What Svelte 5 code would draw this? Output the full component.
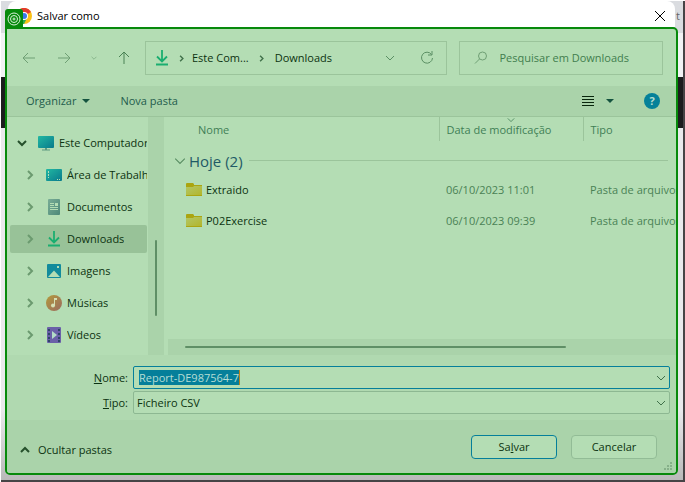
<script>
  const folders = [
    { name: 'Área de Trabalho', icon: 'desktop' },
    { name: 'Documentos', icon: 'document' },
    { name: 'Downloads', icon: 'download', selected: true },
    { name: 'Imagens', icon: 'picture' },
    { name: 'Músicas', icon: 'music' },
    { name: 'Vídeos', icon: 'video' }
  ];
  const files = [
    { name: 'Extraido', date: '06/10/2023 11:01', type: 'Pasta de arquivos' },
    { name: 'P02Exercise', date: '06/10/2023 09:39', type: 'Pasta de arquivos' }
  ];
  let fileName = $state('Report-DE987564-7');
</script>

{#snippet chevron(dir, size = 10)}
  <svg class="chev {dir}" width={size} height={size} viewBox="0 0 10 10" aria-hidden="true">
    <path d="M1 3l4 4 4-4" />
  </svg>
{/snippet}

{#snippet icon(kind)}
  <svg class="icon" width="16" height="16" viewBox="0 0 16 16" aria-hidden="true">
    {#if kind === 'computer'}
      <rect x="0" y="1" width="16" height="12" rx="1" fill="url(#teal)" />
      <path d="M7 13h2v2H7zM4 14.500h8v1H4z" fill="#5f9a80" />
    {:else if kind === 'desktop'}
      <rect x="0" y="2" width="16" height="12" rx="1" fill="url(#teal)" />
      <path d="M2 4h1v2H2zM2 7h1v2H2zM2 10h1v1H2zM11 12h1v1h-1zM13 12h1v1h-1z" fill="#b4ddb4" />
    {:else if kind === 'document'}
      <rect x="2" y="0" width="12" height="16" rx="1" fill="url(#slate)" />
      <path d="M4 4h4v1H4zM4 6h4v1H4zM9 4h3v3H9zM4 8h8v1H4zM4 10h8v1H4z" fill="#b4ddb4" />
    {:else if kind === 'download'}
      <path d="M8 0v11M3 6.500l5 5 5-5M2 14.500h12" fill="none" stroke="#1aae70" stroke-width="1.800" />
    {:else if kind === 'picture'}
      <rect x="1" y="1" width="14" height="14" rx="1" fill="#128b9c" />
      <path d="M2 14l6-6.500 6 6.500z" fill="#b4ddb4" />
      <rect x="11" y="3" width="2" height="2" fill="#b4ddb4" />
    {:else if kind === 'music'}
      <circle cx="8" cy="8" r="8" fill="url(#amber)" />
      <path d="M8 3h3v2H9v6H8z" fill="#d5dfb4" />
      <circle cx="7" cy="10.500" r="2" fill="#d5dfb4" />
    {:else if kind === 'video'}
      <rect x="1" y="0" width="14" height="16" rx="1" fill="#6a60a8" />
      <path d="M2 2h2v2H2zM2 6h2v2H2zM2 10h2v2H2zM2 13h2v2H2zM12 2h2v2h-2zM12 6h2v2h-2zM12 10h2v2h-2zM12 13h2v2h-2z" fill="#2e4668" />
      <path d="M6 4l5 4-5 4z" fill="#b4ddc8" />
    {:else if kind === 'folder'}
      <path d="M0 2q0-1 1-1h6l1 1v1h8v11H0z" fill="#aba510" />
      <path d="M0 5h7l1-1h8v9H0z" fill="url(#gold)" />
    {/if}
  </svg>
{/snippet}

<svg width="0" height="0" class="defs" aria-hidden="true">
  <defs>
    <linearGradient id="teal" x2="1" y2="1"><stop stop-color="#22b8a2" /><stop offset="1" stop-color="#087a8c" /></linearGradient>
    <linearGradient id="slate" y2="1"><stop stop-color="#79ad96" /><stop offset="1" stop-color="#4d8878" /></linearGradient>
    <linearGradient id="amber" x2="1" y2="1"><stop stop-color="#b39a3c" /><stop offset="1" stop-color="#9a6a60" /></linearGradient>
    <linearGradient id="gold" x2="1" y2="1"><stop stop-color="#b2c766" /><stop offset="1" stop-color="#b3b52c" /></linearGradient>
  </defs>
</svg>

<div class="screen">
  <div class="page">
    <div class="tabs">t</div>
    <div class="bar"></div>
    <div class="banner"></div>
    <div class="rest"></div>
  </div>

  <div class="dialog" role="dialog" aria-labelledby="title">
    <header>
      <svg width="16" height="16" viewBox="0 0 16 16" aria-hidden="true">
        <circle cx="8" cy="8" r="8" fill="#fbc116" />
        <path d="M8 8L1 4A8 8 0 0 1 15 4z" fill="#e33b2e" />
        <path d="M8 8L1 4A8 8 0 0 0 8 16l3-6z" fill="#2da94f" />
        <circle cx="8" cy="8" r="4" fill="#fff" />
        <circle cx="8" cy="8" r="3" fill="#3b78e7" />
      </svg>
      <h1 id="title">Salvar como</h1>
      <button class="close" aria-label="Fechar">
        <svg width="10" height="10" viewBox="0 0 10 10"><path d="M0 0l10 10M10 0L0 10" /></svg>
      </button>
    </header>
    <div class="badge">
      <svg width="14" height="14" viewBox="0 0 14 14" aria-hidden="true">
        <circle cx="7" cy="7" r="6" /><circle cx="7" cy="7" r="3.500" /><circle cx="7" cy="7" r="1" />
      </svg>
    </div>

    <div class="body">
      <nav>
        <div class="arrows">
          <button class="dim" aria-label="Voltar"><svg width="14" height="14" viewBox="0 0 14 14"><path d="M1 7h12M6 2L1 7l5 5" /></svg></button>
          <button class="dim" aria-label="Avançar"><svg width="14" height="14" viewBox="0 0 14 14"><path d="M1 7h12M8 2l5 5-5 5" /></svg></button>
          <button class="dim small" aria-label="Recentes">{@render chevron('down', 6)}</button>
          <button aria-label="Acima"><svg width="14" height="14" viewBox="0 0 14 14"><path d="M7 13V1M2 6l5-5 5 5" /></svg></button>
        </div>
        <div class="address">
          {@render icon('download')}
          <span class="sep">{@render chevron('right', 7)}</span>
          <a href="#computador">Este Com...</a>
          <span class="sep">{@render chevron('right', 7)}</span>
          <a href="#downloads">Downloads</a>
          <button class="expand" aria-label="Locais anteriores">{@render chevron('down')}</button>
          <button class="reload" aria-label="Atualizar">
            <svg width="14" height="14" viewBox="0 0 14 14"><path d="M11.500 3.500A5.500 5.500 0 1 0 12.500 7M12 0v4H8" /></svg>
          </button>
        </div>
        <label class="search">
          <svg width="14" height="14" viewBox="0 0 14 14" aria-hidden="true"><circle cx="8.500" cy="5" r="4" /><path d="M5.500 8L1 12.500" /></svg>
          <input type="text" placeholder="Pesquisar em Downloads" aria-label="Pesquisar em Downloads" />
        </label>
      </nav>

      <div class="toolbar">
        <button>Organizar <i class="tri"></i></button>
        <button>Nova pasta</button>
        <button class="view" aria-label="Vista">
          <svg width="12" height="10" viewBox="0 0 12 10"><path d="M0 .5h12M0 3.500h12M0 6.500h12M0 9.500h12" /></svg>
          <i class="tri"></i>
        </button>
        <button class="help" aria-label="Ajuda">?</button>
      </div>

      <div class="content">
        <div class="tree">
          <div class="node root">{@render chevron('down')}{@render icon('computer')}<span>Este Computador</span></div>
          {#each folders as f}
            <div class="node" class:selected={f.selected}>{@render chevron('right')}{@render icon(f.icon)}<span>{f.name}</span></div>
          {/each}
        </div>
        <div class="vscroll"><div class="vthumb"></div></div>
        <div class="files">
          <table>
            <thead>
              <tr>
                <th class="cname">Nome</th>
                <th class="cdate"><span class="sort">{@render chevron('down', 8)}</span>Data de modificação</th>
                <th class="ctype">Tipo</th>
              </tr>
            </thead>
            <tbody>
              <tr class="group">
                <td colspan="3"><div>{@render chevron('down', 12)}<span>Hoje (2)</span><hr /></div></td>
              </tr>
              {#each files as f}
                <tr class="file">
                  <td class="cname"><div>{@render icon('folder')}{f.name}</div></td>
                  <td>{f.date}</td>
                  <td>{f.type}</td>
                </tr>
              {/each}
            </tbody>
          </table>
          <div class="hscroll"><div class="hthumb"></div></div>
        </div>
      </div>

      <div class="fields">
        <label for="name"><u>N</u>ome:</label>
        <div class="field active">
          <input id="name" type="text" bind:value={fileName} />
          <button aria-label="Nomes recentes">{@render chevron('down')}</button>
        </div>
        <label for="type"><u>T</u>ipo:</label>
        <div class="field">
          <select id="type"><option>Ficheiro CSV</option></select>
          {@render chevron('down')}
        </div>
      </div>

      <footer>
        <button class="hide">{@render chevron('up')}Ocultar pastas</button>
        <button class="action primary">Sa<u>l</u>var</button>
        <button class="action">Cancelar</button>
        <svg class="grip" width="8" height="8" viewBox="0 0 8 8" aria-hidden="true">
          <path d="M6 0h2v2H6zM3 3h2v2H3zM6 3h2v2H6zM0 6h2v2H0zM3 6h2v2H3zM6 6h2v2H6z" />
        </svg>
      </footer>
    </div>
  </div>
</div>

<style>
  :global(body) { background: #fff; }
  .defs { position: absolute; }
  .screen {
    --light: #b4ddb4;
    --dark: #aad3aa;
    --line: #9bc49b;
    --ink: #0c3310;
    --mid: #417f56;
    --teal: #057f9a;
    display: grid;
    min-height: 100vh;
    box-sizing: border-box;
    padding: 1px 0 0 1px;
    font: 11px/16px 'Open Sans', 'Noto Sans', sans-serif;
    color: var(--ink);
  }
  .page, .dialog { grid-area: 1 / 1; min-width: 0; }
  .page {
    display: flex;
    flex-direction: column;
    border-right: 2px solid #464446;
    border-bottom: 2px solid #464446;
  }
  .tabs { height: 32px; box-sizing: border-box; padding: 7px 3px 0 0; background: #dadce0; text-align: right; color: #666; }
  .bar { height: 44px; background: #f1f2f4; }
  .banner { height: 51px; background: #1c1c1e; }
  .rest { flex: 1; background: linear-gradient(#e9e9ec 80%, #b9b9b9); }

  .dialog { position: relative; margin: 0 7px 7px 4px; display: flex; flex-direction: column; }
  header {
    display: flex;
    align-items: center;
    gap: 5px;
    height: 26px;
    margin: 0 3px;
    padding: 3px 10px 0 8px;
    box-sizing: border-box;
    background: #fff;
    border-radius: 8px 8px 0 0;
  }
  h1 { flex: 1; margin: 0; font: inherit; color: #000; }
  button {
    display: flex;
    align-items: center;
    justify-content: center;
    padding: 0;
    border: 0;
    background: none;
    font: inherit;
    color: inherit;
  }
  svg { flex: none; }
  button path, .chev path, .search svg { fill: none; stroke: currentColor; }
  .close { color: #000; }
  .badge {
    position: absolute;
    left: 0;
    top: 8px;
    width: 18px;
    height: 19px;
    display: grid;
    place-items: center;
    background: #078a0b;
    border-radius: 3px 3px 0 0;
  }
  .badge circle { fill: none; stroke: #d8f0d8; }

  .body {
    flex: 1;
    display: flex;
    flex-direction: column;
    border: 2px solid #078a0b;
    border-radius: 0 5px 5px 5px;
    background: var(--light);
    overflow: hidden;
  }
  nav { display: flex; gap: 12px; padding: 12px 13px 11px 15px; }
  .arrows { flex: none; display: flex; align-items: center; gap: 21px; width: 111px; color: #4a8254; }
  .arrows .dim { color: #6f9f74; }
  .arrows .small { width: 4px; }
  .address, .search {
    box-sizing: border-box;
    min-width: 0;
    height: 34px;
    border: 1px solid var(--line);
    display: flex;
    align-items: center;
  }
  .address { width: 60%; padding: 0 12px 0 8px; }
  .sep { width: 26px; display: flex; justify-content: center; color: #40704a; }
  .sep .chev { stroke-width: 2; }
  .address .icon + .sep { width: 22px; }
  .address a { color: inherit; text-decoration: none; white-space: nowrap; }
  .expand { margin-left: auto; color: #5b8f64; }
  .reload { margin-left: 25px; color: #5b8f64; }
  .search { width: 40%; gap: 12px; padding: 0 14px; color: #6f9f74; }
  .search input { flex: 1; min-width: 0; padding: 0; border: 0; background: none; font: inherit; outline: 0; }
  .search input::placeholder { color: #427e4e; opacity: 1; }

  .toolbar {
    display: flex;
    align-items: center;
    gap: 30px;
    height: 30px;
    padding: 0 16px 0 19px;
    background: var(--dark);
    border-bottom: 1px solid var(--line);
    color: #235c4c;
  }
  .tri { margin-left: 6px; border: 4px solid transparent; border-top-color: #14533f; border-bottom: 0; }
  .view { margin-left: auto; gap: 6px; color: #08260c; }
  .help { width: 16px; height: 16px; border-radius: 50%; background: #058199; color: #b4ddd0; font-weight: 700; }

  .content { display: flex; height: 238px; }
  .tree { width: 141px; box-sizing: border-box; padding: 12px 1px 0 3px; display: flex; flex-direction: column; gap: 4px; overflow: hidden; }
  .node {
    display: flex;
    align-items: center;
    height: 28px;
    gap: 11px;
    padding-left: 15px;
    border-radius: 2px;
    overflow: hidden;
    white-space: nowrap;
  }
  .node.root { padding-left: 7px; }
  .node span { margin-left: -6px; overflow: hidden; }
  .node .chev { color: #6b9a6f; stroke-width: 2; }
  .node.root .chev { color: #26502c; }
  .selected { background: #98c298; }
  .right { transform: rotate(-90deg); }
  .up { transform: rotate(180deg); }
  .vscroll { width: 16px; background: var(--dark); }
  .vthumb { width: 2px; height: 76px; margin: 123px 0 0 7px; background: #5f8f66; border-radius: 1px; }
  .files { flex: 1; min-width: 0; display: flex; flex-direction: column; justify-content: space-between; overflow: hidden; }
  table { width: 100%; table-layout: fixed; border-collapse: collapse; }
  th, td { padding: 0 0 0 7px; text-align: left; font-weight: 400; white-space: nowrap; color: #4a8254; }
  th { position: relative; height: 24px; padding-top: 2px; box-sizing: border-box; color: var(--mid); }
  th + th { border-left: 1px solid var(--line); }
  .cname { padding-left: 34px; }
  .cdate { width: 144px; }
  .ctype { width: 93px; }
  .sort { position: absolute; top: -1px; left: calc(50% - 4px); line-height: 8px; }
  .group td { height: 33px; padding: 6px 8px 0 10px; box-sizing: border-box; }
  .group div { display: flex; align-items: center; gap: 3px; color: #1f5a66; }
  .group span { font-size: 15px; line-height: 20px; }
  .group .chev { color: #5b8f64; }
  .group hr { flex: 1; margin: 0 0 0 3px; border: 0; border-top: 1px solid var(--line); }
  .file td { height: 31px; }
  .file .cname { padding-left: 22px; color: var(--ink); }
  .file .cname div { display: flex; align-items: center; gap: 4px; }
  .hscroll { display: flex; margin-left: 4px; height: 16px; background: var(--dark); }
  .hthumb { width: 75%; height: 2px; margin: 7px 0 0 17px; background: #5f8f66; border-radius: 1px; }

  .fields {
    display: grid;
    grid-template-columns: 121px 1fr;
    align-items: center;
    gap: 2px 5px;
    padding: 11px 6px 6px 0;
    background: #b0d9b0;
  }
  .fields label { text-align: right; }
  .field {
    display: flex;
    align-items: center;
    justify-content: space-between;
    height: 23px;
    box-sizing: border-box;
    padding: 0 3px;
    border: 1px solid #8db892;
    border-radius: 2px;
    background: var(--light);
    color: #40704a;
  }
  .field.active { border-color: var(--teal); padding-left: 5px; }
  .field input {
    field-sizing: content;
    height: 15px;
    padding: 0;
    border: 0;
    border-right: 1px solid #b8821c;
    background: var(--teal);
    color: #b4ddd4;
    font: inherit;
    outline: 0;
  }
  .field select { flex: 1; appearance: none; padding: 0; border: 0; background: none; font: inherit; color: var(--ink); }

  footer { position: relative; flex: 1; display: flex; align-items: center; gap: 14px; padding: 0 19px 0 13px; background: var(--dark); }
  .hide { gap: 8px; margin-right: auto; padding-top: 6px; }
  .hide .chev { stroke-width: 2; color: #26502c; }
  .action { display: block; width: 86px; height: 24px; border: 1px solid #92bc96; border-radius: 4px; background: var(--light); line-height: 22px; text-align: center; }
  .primary { border-color: var(--teal); }
  .grip { position: absolute; right: 4px; bottom: 3px; fill: #86b089; }
</style>
